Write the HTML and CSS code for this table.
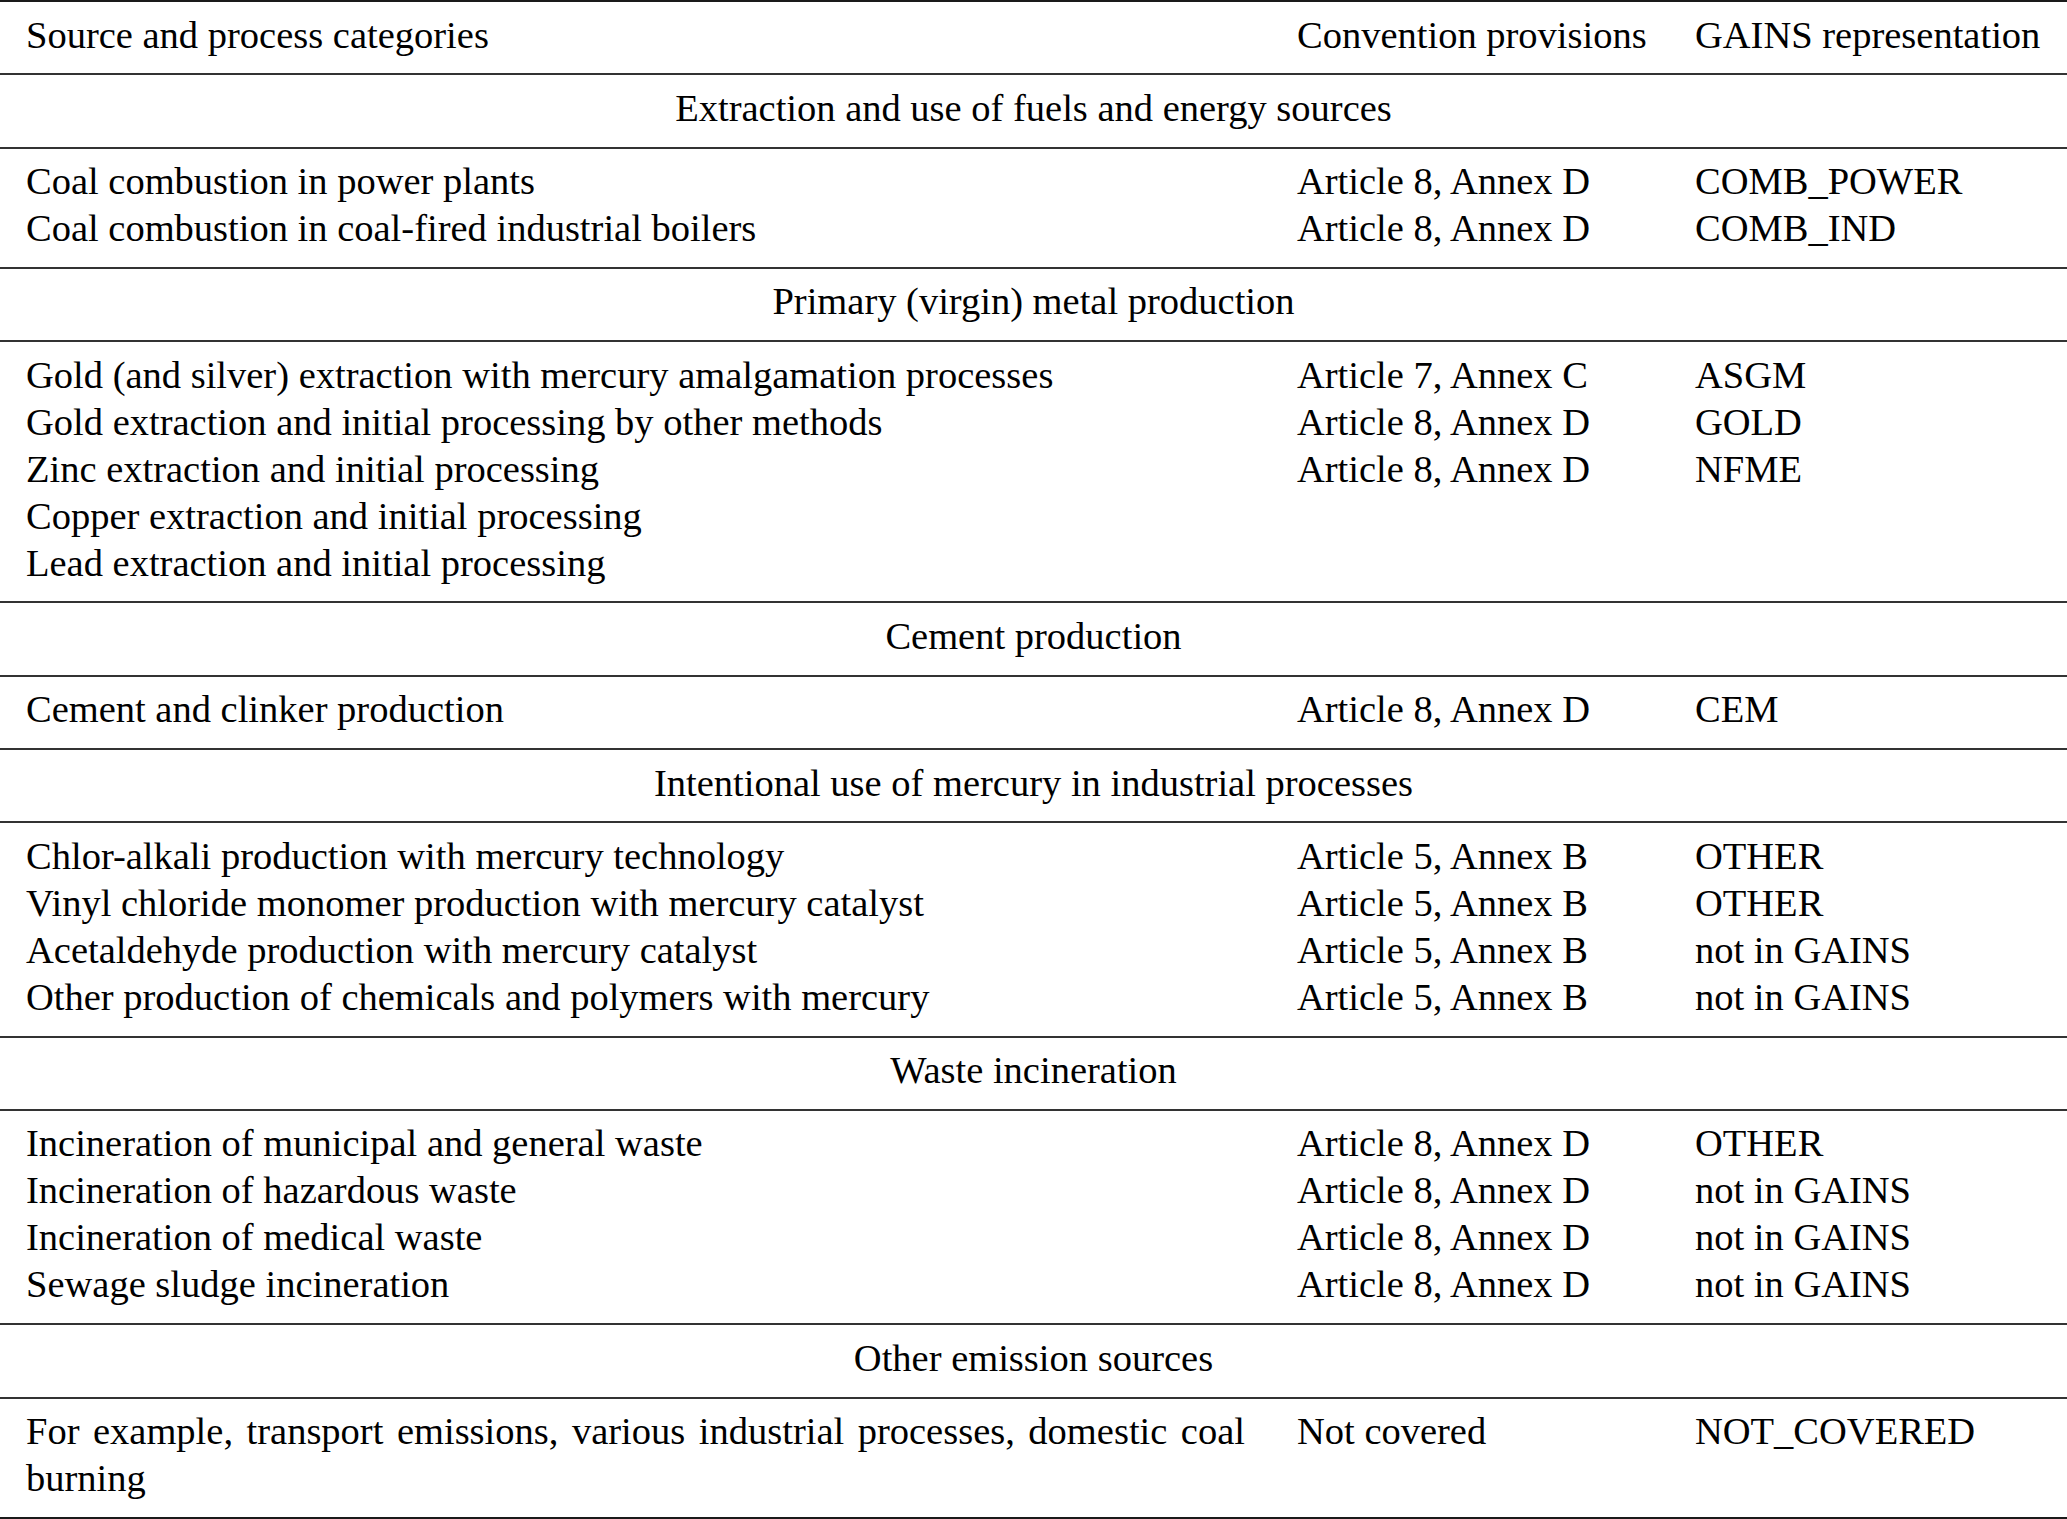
FILE: index.html
```html
<!DOCTYPE html>
<html lang="en">
<head>
<meta charset="utf-8">
<title>Source and process categories</title>
<link rel="stylesheet" href="styles.css">
</head>
<body>
<table class="tbl">
  <colgroup>
    <col class="col-src">
    <col class="col-conv">
    <col class="col-gains">
  </colgroup>
  <thead>
    <tr>
      <th>Source and process categories</th>
      <th class="nw">Convention provisions</th>
      <th class="nw">GAINS representation</th>
    </tr>
  </thead>
  <tbody class="sec">
    <tr><td colspan="3">Extraction and use of fuels and energy sources</td></tr>
  </tbody>
  <tbody class="grp">
    <tr><td>Coal combustion in power plants</td><td class="nw">Article 8, Annex D</td><td class="nw">COMB_POWER</td></tr>
    <tr><td>Coal combustion in coal-fired industrial boilers</td><td class="nw">Article 8, Annex D</td><td class="nw">COMB_IND</td></tr>
  </tbody>
  <tbody class="sec">
    <tr><td colspan="3">Primary (virgin) metal production</td></tr>
  </tbody>
  <tbody class="grp">
    <tr><td>Gold (and silver) extraction with mercury amalgamation processes</td><td class="nw">Article 7, Annex C</td><td class="nw">ASGM</td></tr>
    <tr><td>Gold extraction and initial processing by other methods</td><td class="nw">Article 8, Annex D</td><td class="nw">GOLD</td></tr>
    <tr><td>Zinc extraction and initial processing</td><td class="nw">Article 8, Annex D</td><td class="nw">NFME</td></tr>
    <tr><td>Copper extraction and initial processing</td><td></td><td></td></tr>
    <tr><td>Lead extraction and initial processing</td><td></td><td></td></tr>
  </tbody>
  <tbody class="sec">
    <tr><td colspan="3">Cement production</td></tr>
  </tbody>
  <tbody class="grp">
    <tr><td>Cement and clinker production</td><td class="nw">Article 8, Annex D</td><td class="nw">CEM</td></tr>
  </tbody>
  <tbody class="sec">
    <tr><td colspan="3">Intentional use of mercury in industrial processes</td></tr>
  </tbody>
  <tbody class="grp">
    <tr><td>Chlor-alkali production with mercury technology</td><td class="nw">Article 5, Annex B</td><td class="nw">OTHER</td></tr>
    <tr><td>Vinyl chloride monomer production with mercury catalyst</td><td class="nw">Article 5, Annex B</td><td class="nw">OTHER</td></tr>
    <tr><td>Acetaldehyde production with mercury catalyst</td><td class="nw">Article 5, Annex B</td><td class="nw">not in GAINS</td></tr>
    <tr><td>Other production of chemicals and polymers with mercury</td><td class="nw">Article 5, Annex B</td><td class="nw">not in GAINS</td></tr>
  </tbody>
  <tbody class="sec">
    <tr><td colspan="3">Waste incineration</td></tr>
  </tbody>
  <tbody class="grp">
    <tr><td>Incineration of municipal and general waste</td><td class="nw">Article 8, Annex D</td><td class="nw">OTHER</td></tr>
    <tr><td>Incineration of hazardous waste</td><td class="nw">Article 8, Annex D</td><td class="nw">not in GAINS</td></tr>
    <tr><td>Incineration of medical waste</td><td class="nw">Article 8, Annex D</td><td class="nw">not in GAINS</td></tr>
    <tr><td>Sewage sludge incineration</td><td class="nw">Article 8, Annex D</td><td class="nw">not in GAINS</td></tr>
  </tbody>
  <tbody class="sec">
    <tr><td colspan="3">Other emission sources</td></tr>
  </tbody>
  <tbody class="grp last">
    <tr><td class="just">For example, transport emissions, various industrial processes, domestic coal burning</td><td class="nw">Not covered</td><td class="nw">NOT_COVERED</td></tr>
  </tbody>
</table>
</body>
</html>
```

FILE: styles.css
```css
html, body {
  margin: 0;
  padding: 0;
  background: #ffffff;
  overflow: hidden;
}

.tbl {
  width: 2067px;
  table-layout: fixed;
  border-collapse: collapse;
  font-family: "Liberation Serif", "Times New Roman", serif;
  font-size: 38.5px;
  line-height: 47px;
  color: #000;
  border-top: 2px solid #1a1a1a;
  border-bottom: 2px solid #1a1a1a;
}

.col-src { width: 1271px; }
.col-conv { width: 398px; }
.col-gains { width: 398px; }

.tbl th,
.tbl td {
  font-weight: normal;
  text-align: left;
  vertical-align: top;
  padding: 0 26px;
}

.tbl thead th {
  padding-top: 9.5px;
  padding-bottom: 14.8px;
}

.tbl tbody {
  border-top: 2px solid #333;
}

.sec td {
  text-align: center;
  padding-top: 9.5px;
  padding-bottom: 14.8px;
}

.grp tr:first-child td {
  padding-top: 9.5px;
}

.grp tr:last-child td {
  padding-bottom: 14.8px;
}

.nw {
  white-space: nowrap;
}

.tbl td.just {
  text-align: justify;
}
```
